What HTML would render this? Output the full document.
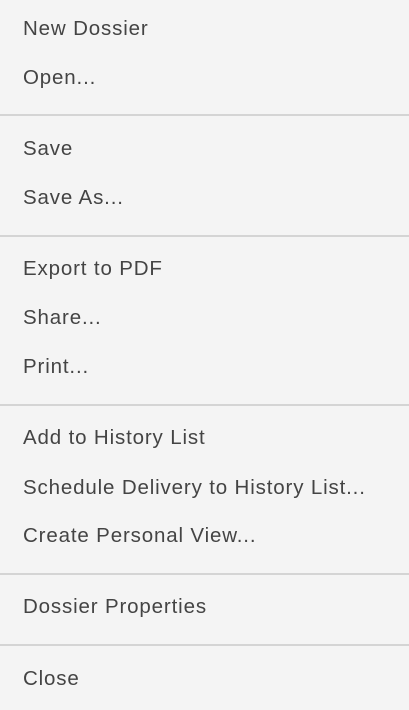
<!DOCTYPE html><html><head><style>
html,body{margin:0;padding:0;width:409px;height:710px;background:#f4f4f4;overflow:hidden}
.t{position:absolute;left:23px;font-family:"Liberation Sans",Arial,sans-serif;font-size:20.5px;letter-spacing:0.85px;color:#444;line-height:24px;height:24px;white-space:nowrap}
.d{position:absolute;left:0;width:409px;height:2px;background:#d4d4d4}
</style></head><body>
<div class="t" style="top:17px">New Dossier</div>
<div class="t" style="top:66px">Open...</div>
<div class="d" style="top:114px"></div>
<div class="t" style="top:137px">Save</div>
<div class="t" style="top:186px">Save As...</div>
<div class="d" style="top:235px"></div>
<div class="t" style="top:257px">Export to PDF</div>
<div class="t" style="top:306px">Share...</div>
<div class="t" style="top:355px">Print...</div>
<div class="d" style="top:404px"></div>
<div class="t" style="top:426px">Add to History List</div>
<div class="t" style="top:476px">Schedule Delivery to History List...</div>
<div class="t" style="top:524px">Create Personal View...</div>
<div class="d" style="top:573px"></div>
<div class="t" style="top:595px">Dossier Properties</div>
<div class="d" style="top:644px"></div>
<div class="t" style="top:667px">Close</div>
</body></html>
